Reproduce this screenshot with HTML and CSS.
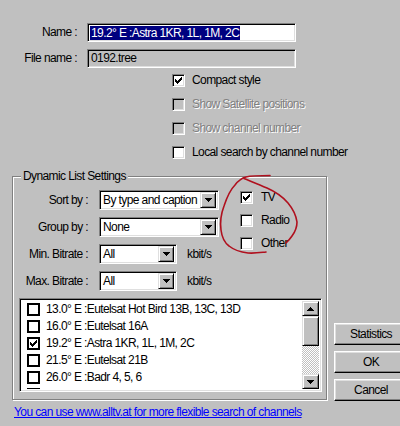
FILE: index.html
```html
<!DOCTYPE html>
<html>
<head>
<meta charset="utf-8">
<link rel="stylesheet" href="styles.css">
</head>
<body>
<div class="dlg">
  <div class="field-row">
    <span class="lbl">Name :</span>
    <div class="edit"><span class="sel">19.2° E :Astra 1KR, 1L, 1M, 2C</span></div>
  </div>
  <div class="field-row last">
    <span class="lbl">File name :</span>
    <div class="edit ro">0192.tree</div>
  </div>
  <div class="opts">
    <div class="chk"><span class="cb"><svg class="tick" width="7" height="7" viewBox="0 0 7 7"><path d="M0 2h1v3h-1zM1 3h1v3h-1zM2 4h1v3h-1zM3 3h1v3h-1zM4 2h1v3h-1zM5 1h1v3h-1zM6 0h1v3h-1z"/></svg></span><span>Compact style</span></div>
    <div class="chk off"><span class="cb"></span><span>Show Satellite positions</span></div>
    <div class="chk off"><span class="cb"></span><span>Show channel number</span></div>
    <div class="chk"><span class="cb"></span><span>Local search by channel number</span></div>
  </div>
  <div class="lower">
    <div class="group">
      <span class="legend">Dynamic List Settings</span>
      <div class="settings">
        <div class="combos">
          <div class="crow"><span class="clbl">Sort by :</span><div class="combo wide"><span class="ctext">By type and caption</span><span class="dd"><svg width="7" height="4" viewBox="0 0 7 4"><path d="M0 0h7v1h-7zM1 1h5v1h-5zM2 2h3v1h-3zM3 3h1v1h-1z"/></svg></span></div></div>
          <div class="crow"><span class="clbl">Group by :</span><div class="combo wide"><span class="ctext">None</span><span class="dd"><svg width="7" height="4" viewBox="0 0 7 4"><path d="M0 0h7v1h-7zM1 1h5v1h-5zM2 2h3v1h-3zM3 3h1v1h-1z"/></svg></span></div></div>
          <div class="crow"><span class="clbl">Min. Bitrate :</span><div class="combo narrow"><span class="ctext">All</span><span class="dd"><svg width="7" height="4" viewBox="0 0 7 4"><path d="M0 0h7v1h-7zM1 1h5v1h-5zM2 2h3v1h-3zM3 3h1v1h-1z"/></svg></span></div><span class="unit">kbit/s</span></div>
          <div class="crow"><span class="clbl">Max. Bitrate :</span><div class="combo narrow"><span class="ctext">All</span><span class="dd"><svg width="7" height="4" viewBox="0 0 7 4"><path d="M0 0h7v1h-7zM1 1h5v1h-5zM2 2h3v1h-3zM3 3h1v1h-1z"/></svg></span></div><span class="unit">kbit/s</span></div>
        </div>
        <div class="types">
          <div class="chk t"><span class="cb"><svg class="tick" width="7" height="7" viewBox="0 0 7 7"><path d="M0 2h1v3h-1zM1 3h1v3h-1zM2 4h1v3h-1zM3 3h1v3h-1zM4 2h1v3h-1zM5 1h1v3h-1zM6 0h1v3h-1z"/></svg></span><span>TV</span></div>
          <div class="chk t"><span class="cb"></span><span>Radio</span></div>
          <div class="chk t"><span class="cb"></span><span>Other</span></div>
        </div>
      </div>
      <div class="list">
        <div class="items">
          <div class="item"><span class="lcb"></span><span>13.0° E :Eutelsat Hot Bird 13B, 13C, 13D</span></div>
          <div class="item"><span class="lcb"></span><span>16.0° E :Eutelsat 16A</span></div>
          <div class="item"><span class="lcb"><svg class="tick" width="7" height="7" viewBox="0 0 7 7"><path d="M0 2h1v3h-1zM1 3h1v3h-1zM2 4h1v3h-1zM3 3h1v3h-1zM4 2h1v3h-1zM5 1h1v3h-1zM6 0h1v3h-1z"/></svg></span><span>19.2° E :Astra 1KR, 1L, 1M, 2C</span></div>
          <div class="item"><span class="lcb"></span><span>21.5° E :Eutelsat 21B</span></div>
          <div class="item"><span class="lcb"></span><span>26.0° E :Badr 4, 5, 6</span></div>
          <div class="item"><span class="lcb"></span><span>28.2° E :Eutelsat 28A, Astra 1N, 2A, 2F</span></div>
        </div>
        <div class="vscroll">
          <div class="sbtn"><svg width="7" height="4" viewBox="0 0 7 4"><path d="M3 0h1v1h-1zM2 1h3v1h-3zM1 2h5v1h-5zM0 3h7v1h-7z"/></svg></div>
          <div class="thumb"></div>
          <div class="track"></div>
          <div class="sbtn"><svg width="7" height="4" viewBox="0 0 7 4"><path d="M0 0h7v1h-7zM1 1h5v1h-5zM2 2h3v1h-3zM3 3h1v1h-1z"/></svg></div>
        </div>
      </div>
    </div>
    <div class="buttons">
      <div class="btn">Statistics</div>
      <div class="btn">OK</div>
      <div class="btn">Cancel</div>
    </div>
  </div>
  <a class="link" href="#">You can use www.alltv.at for more flexible search of channels</a>
</div>
<svg class="ink" width="400" height="426" viewBox="0 0 400 426">
  <path d="M270 175.5 C260 175.5 250 176 246 177 C242 178 238 181 235 185 C231 189 227 197 224 206 C221 214 220 223 221 230 C222 238 225 243 229 246 C234 250 240 252 248 253 C255 253.5 261 252.5 266 252" />
  <path d="M244 178.5 C250 181 258 184 267 188 C276 192 283 197 288 203 C293 209 296 215 297 222 C297 228 295 232 292 236 C290 239 288 241 286 243" />
</svg>
</body>
</html>
```
FILE: styles.css
```css
html, body {
  margin: 0;
  padding: 0;
}
body {
  width: 400px;
  height: 426px;
  overflow: hidden;
  position: relative;
  background: #c0c0c0;
  color: #000;
  font-family: "Liberation Sans", Arial, sans-serif;
  font-size: 12px;
  line-height: 15px;
  letter-spacing: -0.6px;
}
.dlg {
  padding-top: 23px;
}
.field-row {
  display: flex;
  align-items: center;
  height: 19px;
  margin-bottom: 7px;
}
.field-row.last {
  margin-bottom: 0;
}
.lbl {
  width: 77px;
  text-align: right;
  margin-right: 10px;
  flex: none;
}
.edit {
  width: 209px;
  height: 19px;
  box-sizing: border-box;
  border: 1px solid;
  border-color: #808080 #fff #fff #808080;
  box-shadow: inset 1px 1px 0 #000, inset -1px -1px 0 #dfdfdf;
  background: #fff;
  padding-left: 2px;
  display: flex;
  align-items: center;
  white-space: nowrap;
}
.edit.ro {
  background: #c0c0c0;
  padding-left: 3px;
}
.sel {
  background: #000080;
  color: #fff;
  line-height: 14px;
  padding: 0 1px;
}
.opts {
  margin-left: 172px;
}
.chk {
  display: flex;
  align-items: center;
  height: 24px;
  gap: 7px;
  white-space: nowrap;
}
.chk.off {
  color: #808080;
  text-shadow: 1px 1px 0 #fff;
}
.cb {
  width: 13px;
  height: 13px;
  box-sizing: border-box;
  border: 1px solid;
  border-color: #808080 #fff #fff #808080;
  box-shadow: inset 1px 1px 0 #000, inset -1px -1px 0 #dfdfdf;
  background: #fff;
  flex: none;
  display: flex;
  align-items: center;
  justify-content: center;
}
.chk.off .cb {
  background: #c0c0c0;
}
.tick {
  display: block;
  fill: #000;
}
.lower {
  display: flex;
  align-items: flex-start;
  margin-top: 12px;
}
.group {
  position: relative;
  flex: none;
  margin-left: 12px;
  width: 315px;
  height: 224px;
  box-sizing: border-box;
  border: 1px solid #808080;
  box-shadow: inset 1px 1px 0 #fff, 1px 1px 0 #fff;
  padding: 13px 0 0 6px;
}
.legend {
  position: absolute;
  left: 8px;
  top: -8px;
  padding: 0 2px;
  background: #c0c0c0;
  white-space: nowrap;
}
.settings {
  display: flex;
}
.combos {
  margin-left: -6px;
}
.crow {
  display: flex;
  align-items: center;
  height: 20px;
  margin-bottom: 7px;
}
.crow:last-child {
  margin-bottom: 0;
}
.clbl {
  width: 75px;
  text-align: right;
  margin-right: 11px;
  flex: none;
  white-space: nowrap;
}
.combo {
  height: 20px;
  box-sizing: border-box;
  border: 1px solid;
  border-color: #808080 #fff #fff #808080;
  box-shadow: inset 1px 1px 0 #000, inset -1px -1px 0 #dfdfdf;
  background: #fff;
  padding: 2px;
  display: flex;
  align-items: center;
  flex: none;
}
.combo.wide {
  width: 120px;
}
.combo.narrow {
  width: 78px;
}
.ctext {
  flex: 1;
  padding-left: 1px;
  white-space: nowrap;
  overflow: hidden;
}
.dd, .sbtn {
  box-sizing: border-box;
  background: #c0c0c0;
  border: 1px solid;
  border-color: #dfdfdf #000 #000 #dfdfdf;
  box-shadow: inset 1px 1px 0 #fff, inset -1px -1px 0 #808080;
  display: flex;
  align-items: center;
  justify-content: center;
  flex: none;
}
.dd {
  width: 16px;
  height: 16px;
}
.dd svg, .sbtn svg {
  display: block;
  fill: #000;
}
.unit {
  margin-left: 10px;
}
.types {
  margin-left: 21px;
  margin-top: -4px;
}
.chk.t {
  height: 23px;
  gap: 8px;
}
.list {
  margin-top: 7px;
  width: 303px;
  height: 94px;
  box-sizing: border-box;
  border: 1px solid;
  border-color: #808080 #fff #fff #808080;
  box-shadow: inset 1px 1px 0 #000, inset -1px -1px 0 #dfdfdf;
  background: #fff;
  padding: 2px;
  display: flex;
}
.items {
  flex: 1;
  overflow: hidden;
}
.item {
  display: flex;
  align-items: center;
  height: 17px;
  padding-left: 5px;
  gap: 6px;
  white-space: nowrap;
}
.lcb {
  width: 13px;
  height: 13px;
  box-sizing: border-box;
  border: 2px solid #000;
  flex: none;
  display: flex;
  align-items: center;
  justify-content: center;
}
.vscroll {
  width: 17px;
  display: flex;
  flex-direction: column;
  flex: none;
}
.sbtn {
  width: 17px;
  height: 15px;
}
.thumb {
  height: 30px;
  box-sizing: border-box;
  background: #c0c0c0;
  border: 1px solid;
  border-color: #dfdfdf #000 #000 #dfdfdf;
  box-shadow: inset 1px 1px 0 #fff, inset -1px -1px 0 #808080;
}
.track {
  flex: 1;
  background: repeating-conic-gradient(#c0c0c0 0 25%, #fff 0 50%) 0 0 / 2px 2px;
}
.buttons {
  flex: none;
  margin-left: 7px;
  margin-top: 147px;
  display: flex;
  flex-direction: column;
  gap: 6px;
}
.btn {
  width: 74px;
  height: 22px;
  box-sizing: border-box;
  background: #c0c0c0;
  border: 1px solid;
  border-color: #fff #000 #000 #fff;
  box-shadow: inset -1px -1px 0 #808080, inset 1px 1px 0 #dfdfdf;
  display: flex;
  align-items: center;
  justify-content: center;
}
.link {
  display: block;
  margin: 4px 0 0 14px;
  color: #0000ff;
  text-decoration: underline;
  white-space: nowrap;
}
.ink {
  position: absolute;
  left: 0;
  top: 0;
  pointer-events: none;
  fill: none;
  stroke: #b0101e;
  stroke-width: 1.6;
  stroke-linecap: round;
  stroke-linejoin: round;
}
```
